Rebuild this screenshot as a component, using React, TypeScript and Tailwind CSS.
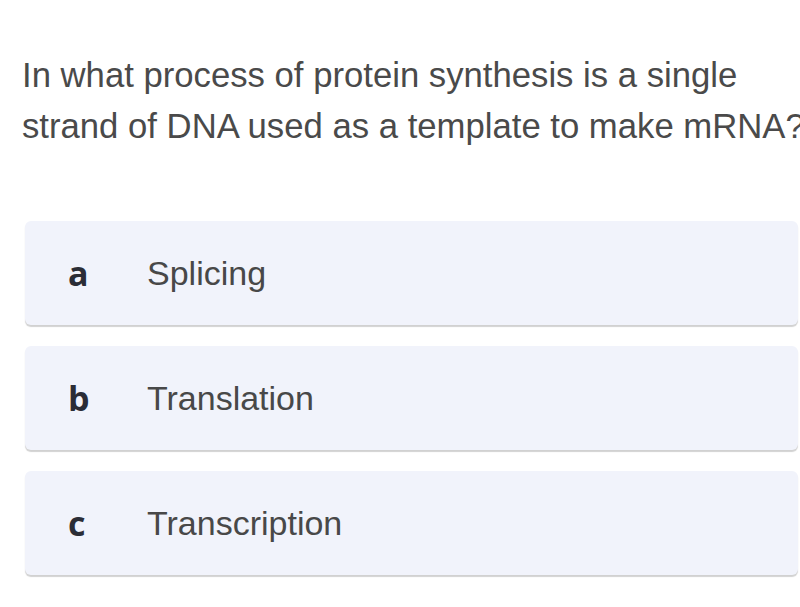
const options = [
  { letter: "a", label: "Splicing" },
  { letter: "b", label: "Translation" },
  { letter: "c", label: "Transcription" },
];

export default function App() {
  return (
    <div className="h-[607px] w-[800px] overflow-hidden bg-white">
      <h1
        className="w-[840px] pl-[22px] pt-[50px] text-[34.7px] font-normal leading-[51px] text-[#4a4a4a]"
        style={{ fontFamily: '"Liberation Sans", Arial, sans-serif' }}
      >
        In what process of protein synthesis is a single strand of DNA used as a template to make mRNA?
      </h1>
      <div className="mt-[69px] flex flex-col gap-[21px] pl-[25px] pr-[2px]">
        {options.map(({ letter, label }) => (
          <div
            key={letter}
            className="flex h-[104px] items-center rounded-md bg-[#f1f3fb] shadow-[0_2px_1px_rgba(0,0,0,0.18)]"
          >
            <span
              className="w-[122px] pl-[43px] text-[34px] font-bold text-[#2b2d36]"
              style={{ fontFamily: '"Open Sans", sans-serif' }}
            >
              {letter}
            </span>
            <span
              className="text-[34px] text-[#484848]"
              style={{ fontFamily: '"Liberation Sans", Arial, sans-serif' }}
            >
              {label}
            </span>
          </div>
        ))}
      </div>
    </div>
  );
}
